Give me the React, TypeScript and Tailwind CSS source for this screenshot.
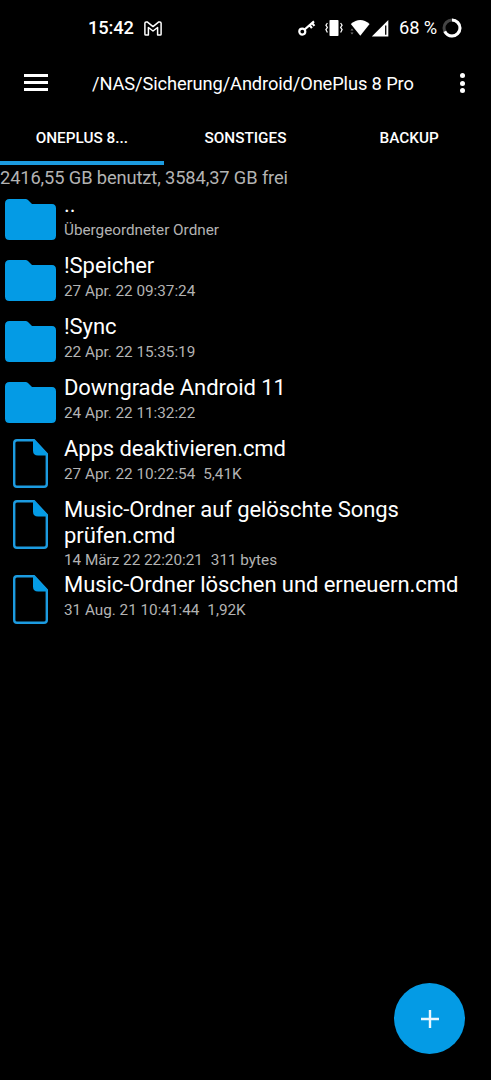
import React, { useState } from 'react';

type Entry = {
  kind: 'folder' | 'file';
  name: string;
  info: string;
  size?: string;
};

const TABS = ['ONEPLUS 8...', 'SONSTIGES', 'BACKUP'];

const ENTRIES: Entry[] = [
  { kind: 'folder', name: '..', info: 'Übergeordneter Ordner' },
  { kind: 'folder', name: '!Speicher', info: '27 Apr. 22 09:37:24' },
  { kind: 'folder', name: '!Sync', info: '22 Apr. 22 15:35:19' },
  { kind: 'folder', name: 'Downgrade Android 11', info: '24 Apr. 22 11:32:22' },
  { kind: 'file', name: 'Apps deaktivieren.cmd', info: '27 Apr. 22 10:22:54', size: '5,41K' },
  { kind: 'file', name: 'Music-Ordner auf gelöschte Songs prüfen.cmd', info: '14 März 22 22:20:21', size: '311 bytes' },
  { kind: 'file', name: 'Music-Ordner löschen und erneuern.cmd', info: '31 Aug. 21 10:41:44', size: '1,92K' },
];

const FolderIcon = () => (
  <svg width="51" height="41" viewBox="0 0 51 41" className="ml-[5px] mt-[7px]" fill="#049be5">
    <path d="M4.5 0H20.5Q22 0 23 1L27 5H47Q51 5 51 9.500V36.500Q51 41 46.500 41H4.500Q0 41 0 36.500V4.500Q0 0 4.500 0Z" />
  </svg>
);

const FileIcon = () => (
  <svg width="35" height="49" viewBox="0 0 35 49" className="ml-[13px] mt-[3px]">
    <path d="M4 1.200H21L33.800 15V45Q33.800 47.800 31 47.800H4Q1.200 47.800 1.200 45V4Q1.200 1.200 4 1.200Z" fill="none" stroke="#1c9be0" strokeWidth="2.400" />
    <path d="M20 1H21.500L34 14.500V16.500H25Q20 16.500 20 11.500Z" fill="#049be5" />
  </svg>
);

const StatusBar = () => (
  <div className="flex h-14 items-center">
    <span className="ml-[88px] w-[46px] whitespace-nowrap text-[18.300px] font-medium tracking-[-0.1px]">15:42</span>
    <svg width="18" height="15" viewBox="0 0 18 15" className="ml-[10px]" fill="none" stroke="#fff" strokeWidth="1.500" strokeLinejoin="round">
      <path d="M.9 13.200V2.200Q.9.9 2.200.9H3.200L9 5.600 14.800.9H15.800Q17.100.9 17.100 2.200V13.200Q17.100 14 16.200 14H13.600V6.500L9 10 4.400 6.500V14H1.800Q.9 14 .9 13.200Z" />
    </svg>
    <svg width="18" height="16" viewBox="0 0 18 16" className="ml-[136px]" fill="none" stroke="#fff">
      <circle cx="4.300" cy="11.600" r="3" strokeWidth="2.200" />
      <path d="M6.600 9.500L16 1.300M11.700 5.300L13.900 8.100M14.200 3.100L16.400 5.900" strokeWidth="2.200" />
    </svg>
    <svg width="18" height="16" viewBox="0 0 18 16" className="ml-[9px]" fill="#fff">
      <rect x="4.500" y="0" width="9" height="16" rx=".8" />
      <path d="M2.400 3L.9 5.200 2.400 7.400.9 9.600 2.400 12.500M15.600 3L17.100 5.200 15.600 7.400 17.100 9.600 15.600 12.500" fill="none" stroke="#fff" strokeWidth="1.200" />
    </svg>
    <svg width="20" height="16" viewBox="0 0 20 16" className="ml-[7px]" fill="#fff">
      <path d="M.8 4Q10.300-4 19.600 4L10.300 15.800Z" />
      <path d="M.5 10.500L2 8.500 3.500 10.500ZM.5 12.500L2 14.500 3.500 12.500Z" fill="#777" />
    </svg>
    <svg width="18" height="17" viewBox="0 0 18 17" className="ml-px" fill="#fff">
      <path d="M.8 16.500L17.300 0V16.500Z" />
      <path d="M14 5.500H15.400V14.800H14Z" fill="#111" />
    </svg>
    <span className="ml-[10px] w-[38px] whitespace-nowrap text-[18.300px] tracking-[-0.1px]">68 %</span>
    <svg width="20" height="20" viewBox="0 0 20 20" className="ml-[5px]" fill="none" strokeWidth="3">
      <circle cx="10" cy="10" r="8" stroke="#444" />
      <circle cx="10" cy="10" r="8" stroke="#fff" pathLength="100" strokeDasharray="68 32" transform="rotate(-90 10 10)" />
    </svg>
  </div>
);

function App() {
  const [activeTab, setActiveTab] = useState(0);

  return (
    <div className="relative h-[1080px] w-[491px] overflow-hidden bg-black font-[Roboto,sans-serif] text-white">
      <StatusBar />

      <header className="flex h-[54px] items-center">
        <button className="mb-px ml-6 flex w-6 flex-col gap-[4px]" aria-label="Menu">
          <span className="h-[3px] w-6 bg-white" />
          <span className="h-[3px] w-6 bg-white" />
          <span className="h-[3px] w-6 bg-white" />
        </button>
        <h1 className="ml-[44px] w-[368px] whitespace-nowrap pt-px text-[18.300px] tracking-[-0.12px]">/NAS/Sicherung/Android/OnePlus 8 Pro</h1>
        <button className="flex flex-col gap-[2.700px]" aria-label="More">
          <span className="size-[5px] rounded-full bg-white" />
          <span className="size-[5px] rounded-full bg-white" />
          <span className="size-[5px] rounded-full bg-white" />
        </button>
      </header>

      <nav className="grid h-[55px] grid-cols-3">
        {TABS.map((tab, i) => (
          <button
            key={tab}
            onClick={() => setActiveTab(i)}
            className={`border-b-4 pt-[5px] text-[15.300px] font-medium ${i === activeTab ? 'border-[#1c9be0]' : 'border-transparent'}`}
          >
            {tab}
          </button>
        ))}
      </nav>

      <p className="h-[27px] text-[18.300px] leading-[25px] tracking-[-0.12px] text-[#b3b3b3]">2416,55 GB benutzt, 3584,37 GB frei</p>

      <ul>
        {ENTRIES.map((entry) => (
          <li key={entry.name} className="flex min-h-[61px]">
            <div className="w-16 shrink-0">{entry.kind === 'folder' ? <FolderIcon /> : <FileIcon />}</div>
            <div className="w-[400px]">
              <div className="text-[22px] leading-[25.500px] tracking-[-0.07px]">{entry.name}</div>
              <div className="flex gap-2 text-[15.300px] leading-6 tracking-[-0.02px] text-[#b3b3b3]">
                <span>{entry.info}</span>
                {entry.size && <span>{entry.size}</span>}
              </div>
            </div>
          </li>
        ))}
      </ul>

      <button className="absolute left-[394px] top-[983px] flex size-[71px] items-center justify-center rounded-full bg-[#049be5]" aria-label="Add">
        <svg width="18" height="18" viewBox="0 0 18 18" stroke="#eaf8ff" strokeWidth="2.400">
          <path d="M9 0V18M0 9H18" />
        </svg>
      </button>
    </div>
  );
}

export default App;
